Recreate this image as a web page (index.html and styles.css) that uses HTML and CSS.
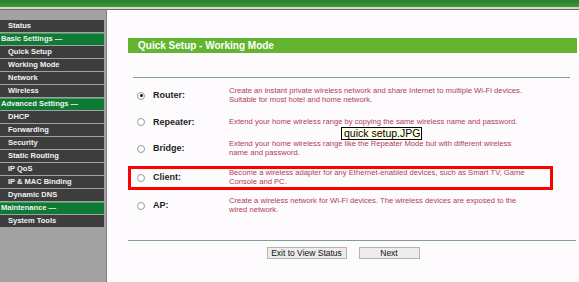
FILE: index.html
```html
<!DOCTYPE html>
<html>
<head>
<meta charset="utf-8">
<link rel="stylesheet" href="styles.css">
</head>
<body>
<div class="topbar"></div>
<div class="layout">
  <nav class="sidebar">
    <div class="item">Status</div>
    <div class="section">Basic Settings —</div>
    <div class="item">Quick Setup</div>
    <div class="item">Working Mode</div>
    <div class="item">Network</div>
    <div class="item">Wireless</div>
    <div class="section">Advanced Settings —</div>
    <div class="item">DHCP</div>
    <div class="item">Forwarding</div>
    <div class="item">Security</div>
    <div class="item">Static Routing</div>
    <div class="item">IP QoS</div>
    <div class="item">IP &amp; MAC Binding</div>
    <div class="item">Dynamic DNS</div>
    <div class="section">Maintenance —</div>
    <div class="item">System Tools</div>
  </nav>
  <main class="main">
    <div class="title">Quick Setup - Working Mode</div>
    <div class="sep-top"></div>
    <div class="options">
      <div class="opt r1">
        <span class="radio checked"></span>
        <span class="label">Router:</span>
        <span class="desc">Create an instant private wireless network and share Internet to multiple Wi-Fi devices.<br>Suitable for most hotel and home network.</span>
      </div>
      <div class="opt r2">
        <span class="radio"></span>
        <span class="label">Repeater:</span>
        <span class="desc">Extend your home wireless range by copying the same wireless name and password.</span>
      </div>
      <div class="opt r3">
        <span class="radio"></span>
        <span class="label">Bridge:</span>
        <span class="desc">Extend your home wireless range like the Repeater Mode but with different wireless<br>name and password.</span>
      </div>
      <div class="opt r4">
        <span class="radio"></span>
        <span class="label">Client:</span>
        <span class="desc">Become a wireless adapter for any Ethernet-enabled devices, such as Smart TV, Game<br>Console and PC.</span>
      </div>
      <div class="opt r5">
        <span class="radio"></span>
        <span class="label">AP:</span>
        <span class="desc">Create a wireless network for Wi-Fi devices. The wireless devices are exposed to the<br>wired network.</span>
      </div>
    </div>
    <div class="sep-bottom"></div>
    <div class="buttons">
      <button class="btn btn-exit">Exit to View Status</button>
      <button class="btn btn-next">Next</button>
    </div>
    <div class="highlight"></div>
    <div class="tooltip">quick setup.JPG</div>
  </main>
</div>
</body>
</html>
```
FILE: styles.css
```css
html, body {
  margin: 0;
  padding: 0;
  height: 100%;
  overflow: hidden;
}
body {
  font-family: "Liberation Sans", Arial, sans-serif;
  background: #fdfbfd;
  display: flex;
  flex-direction: column;
}
.topbar {
  height: 7px;
  background: linear-gradient(#2a7f2a, #3f9a3a);
  border-bottom: 1px solid #c9dcc6;
  box-shadow: 0 1px 0 #d6d6d6, 0 3px 0 #6a6a6a;
  margin-bottom: 2px;
  flex: none;
}
.layout {
  display: flex;
  flex: 1;
}
.sidebar {
  width: 106px;
  background: #a2a2a2;
  border-right: 1px solid #7e7e7e;
  padding-top: 10px;
  box-sizing: content-box;
  display: flex;
  flex-direction: column;
  gap: 1px;
}
.item, .section {
  width: 104px;
  height: 12px;
  line-height: 12px;
  font-size: 7.5px;
  font-weight: bold;
  color: #f2f2f2;
  white-space: nowrap;
}
.item {
  background: #3d3d3d;
  padding-left: 8px;
  box-sizing: border-box;
}
.section {
  background: #0e7a33;
  padding-left: 1px;
  box-sizing: border-box;
  box-shadow: inset 0 1px 0 #4f9e63;
}
.main {
  flex: 1;
  position: relative;
  background: #fdfbfd;
  padding: 28px 2px 0 21px;
  display: flex;
  flex-direction: column;
}
.title {
  height: 15px;
  line-height: 15px;
  background: #63b52f;
  color: #ffffff;
  font-size: 10px;
  font-weight: bold;
  padding-left: 10px;
}
.sep-top {
  height: 1px;
  background: #7f9f8f;
  margin: 24px 7px 0 5px;
}
.options {
  display: grid;
  grid-template-rows: 26px 27px 26px 32px 24px;
  margin-top: 4px;
}
.opt {
  display: flex;
  align-items: center;
}
.radio {
  width: 8px;
  height: 8px;
  border: 1px solid #9a9a9a;
  border-radius: 50%;
  box-sizing: border-box;
  background: #ffffff;
  margin-left: 9px;
  margin-top: 1px;
  position: relative;
  flex: none;
}
.radio.checked::after {
  content: "";
  position: absolute;
  left: 1.5px;
  top: 1.5px;
  width: 3px;
  height: 3px;
  border-radius: 50%;
  background: #111111;
}
.label {
  width: 76px;
  margin-left: 8px;
  font-size: 9px;
  font-weight: bold;
  color: #1e1e1e;
  flex: none;
}
.desc {
  font-size: 7.65px;
  line-height: 9.5px;
  color: #b23b57;
  white-space: nowrap;
}
.sep-bottom {
  height: 1px;
  background: #7f9f8f;
  margin: 23px 1px 0 0;
}
.buttons {
  display: flex;
  justify-content: center;
  gap: 12px;
  margin: 6px 19px 0 0;
}
.btn {
  height: 12px;
  padding: 0;
  font-family: "Liberation Sans", Arial, sans-serif;
  font-size: 8.5px;
  line-height: 10px;
  color: #111111;
  background: #ececec;
  border: 1px solid #b4b4b4;
  box-sizing: border-box;
}
.btn-exit { width: 80px; }
.btn-next { width: 61px; }
.highlight {
  position: absolute;
  left: 21px;
  top: 156px;
  width: 425px;
  height: 24px;
  border: 3px solid #ff0000;
  box-sizing: border-box;
}
.tooltip {
  position: absolute;
  left: 234px;
  top: 117px;
  width: 81px;
  height: 13px;
  box-sizing: border-box;
  border: 1px solid #000000;
  background: #ffffe8;
  font-family: "Liberation Sans", Arial, sans-serif;
  font-size: 10.5px;
  line-height: 11px;
  padding-left: 2px;
  color: #000000;
  white-space: nowrap;
}
```
